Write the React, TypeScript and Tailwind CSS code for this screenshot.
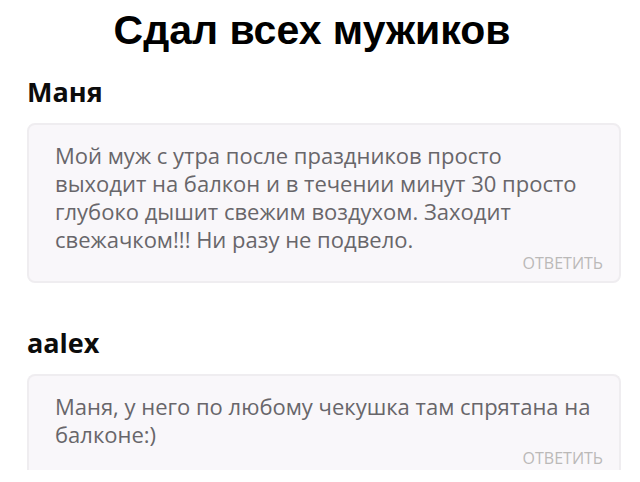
interface Comment {
  id: number
  author: string
  text: string
}

const comments: Comment[] = [
  {
    id: 1,
    author: 'Маня',
    text: 'Мой муж с утра после праздников просто выходит на балкон и в течении минут 30 просто глубоко дышит свежим воздухом. Заходит свежачком!!! Ни разу не подвело.',
  },
  {
    id: 2,
    author: 'aalex',
    text: 'Маня, у него по любому чекушка там спрятана на балконе:)',
  },
]

function CommentCard({ author, text }: Comment) {
  return (
    <article className="group">
      <h2 className="text-[27px] leading-10 font-bold text-[#0c0c0c]">{author}</h2>
      {/* The last card is left open at the bottom */}
      <div className="mt-[11px] rounded-lg border-2 border-[#efedf0] bg-[#f9f7fa] pt-4 pr-4 pb-2 pl-[26px] group-last:rounded-b-none group-last:border-b-0 group-last:pb-0.5">
        <p className="pr-2 text-[22px] leading-7 text-[#68666a]">{text}</p>
        <div className="flex justify-end">
          <button type="button" className="text-base leading-5 text-[#bbb9b8] uppercase">
            Ответить
          </button>
        </div>
      </div>
    </article>
  )
}

export default function App() {
  return (
    <main className="bg-white pb-3 font-['Open_Sans','Noto_Sans',sans-serif]">
      <h1 className="pt-1 pr-4 text-center font-['Liberation_Sans',Arial,sans-serif] text-[41px] leading-[52px] font-bold text-black">
        Сдал всех мужиков
      </h1>
      <section className="mt-4 flex flex-col gap-10 pr-[19px] pl-[27px]">
        {comments.map((comment) => (
          <CommentCard key={comment.id} {...comment} />
        ))}
      </section>
    </main>
  )
}
